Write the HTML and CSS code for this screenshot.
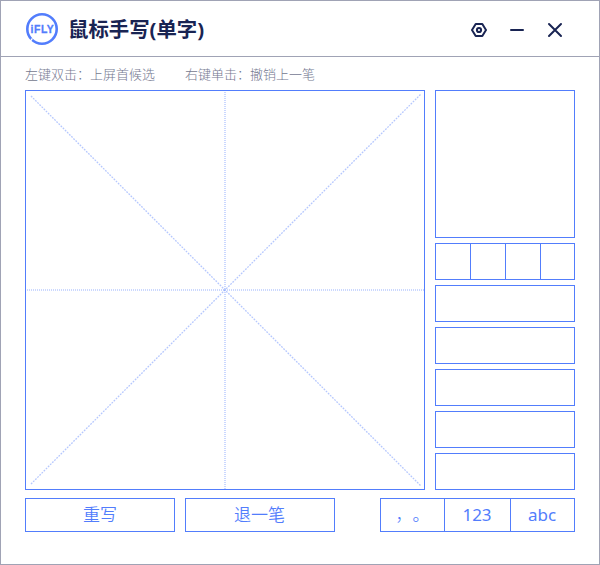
FILE: index.html
```html
<!DOCTYPE html>
<html lang="zh-CN">
<head>
<meta charset="utf-8">
<title>鼠标手写(单字)</title>
<link rel="stylesheet" href="styles.css">
</head>
<body>
<div class="window">
  <header class="titlebar">
    <svg class="logo" width="32" height="32" viewBox="0 0 32 32">
      <circle cx="16" cy="16" r="14.7" fill="none" stroke="#527dfc" stroke-width="2.6"/>
      <path d="M4.4 28.2L6.4 25.4" stroke="#fff" stroke-width="1.4"/>
      <text class="logo-text" x="4.6" y="19.6" textLength="23.2" lengthAdjust="spacing">iFLY</text>
    </svg>
    <h1 class="title">鼠标手写(单字)</h1>
    <div class="controls">
      <svg width="16" height="16" viewBox="0 0 16 16" fill="none" stroke="#192453" stroke-width="2" stroke-linejoin="round">
        <path d="M4.7 2H11.3L15 8L11.3 14H4.7L1 8Z"/><circle cx="8" cy="8" r="2.1"/>
      </svg>
      <svg width="16" height="16" viewBox="0 0 16 16" stroke="#192453" stroke-width="2" stroke-linecap="round"><path d="M2 8H14"/></svg>
      <svg width="16" height="16" viewBox="0 0 16 16" stroke="#192453" stroke-width="2" stroke-linecap="round"><path d="M2 2L14 14M14 2L2 14"/></svg>
    </div>
  </header>
  <div class="hints"><span>左键双击：上屏首候选</span><span>右键单击：撤销上一笔</span></div>
  <main class="board">
    <div class="pad">
      <svg width="398" height="398" viewBox="0 0 398 398" fill="none" stroke="#527dfc">
        <path d="M199 1V398M1 199H398" stroke-width="2" stroke-dasharray="1 1" stroke-opacity=".3"/>
        <path d="M5 5L395 395M5 393L395 3" stroke-width="1.3" stroke-dasharray="1.8 1.2" stroke-opacity=".42"/>
      </svg>
    </div>
    <div class="candidates">
      <div class="box main-candidate"></div>
      <div class="box split"><i></i><i></i><i></i><i></i></div>
      <div class="box"></div>
      <div class="box"></div>
      <div class="box"></div>
      <div class="box"></div>
      <div class="box"></div>
    </div>
  </main>
  <footer class="actions">
    <button class="btn">重写</button>
    <button class="btn undo">退一笔</button>
    <div class="modes">
      <button class="mode punct"><span>，</span><span>。</span></button>
      <button class="mode latin">123</button>
      <button class="mode latin">abc</button>
    </div>
  </footer>
</div>
</body>
</html>
```

FILE: styles.css
```css
* { box-sizing: border-box; }
body { margin: 0; background: #fff; font-family: "Noto Sans", "Noto Sans CJK SC", sans-serif; }
svg { display: block; }
.window { width: 600px; height: 565px; border: 1px solid #a0a3b5; }
.titlebar { height: 56px; display: flex; align-items: center; padding: 0 36px 0 25px; border-bottom: 1px solid #a0a3b5; }
.logo { margin-right: 10px; margin-top: 1px; }
.logo-text { font: bold 10.4px "Liberation Sans", sans-serif; fill: #527dfc; stroke: #527dfc; stroke-width: .3; }
.title { margin: 1px 0 0; font: bold 20.4px/30px "Noto Sans", "Noto Sans CJK SC", sans-serif; color: #192453; white-space: nowrap; }
.controls { margin-left: auto; margin-top: 3px; display: flex; gap: 22px; }
.hints { height: 33px; padding: 7px 24px 0; display: flex; gap: 30px; font-size: 13px; line-height: 20px; font-weight: 300; color: #74788f; font-family: "Noto Sans CJK SC", sans-serif; }
.board { display: flex; gap: 10px; padding: 0 24px; height: 400px; }
.pad { width: 400px; border: 1px solid #527dfc; }
.candidates { width: 140px; display: flex; flex-direction: column; justify-content: space-between; }
.box { height: 37px; border: 1px solid #527dfc; }
.main-candidate { height: 148px; }
.split { display: grid; grid-template-columns: 34px 35px 35px 34px; }
.split i + i { border-left: 1px solid #527dfc; }
.actions { display: flex; gap: 10px; padding: 8px 24px 0; }
button { margin: 0; padding: 0; background: #fff; color: #527dfc; font: 350 17px/32px "Noto Sans", "Noto Sans CJK SC", sans-serif; }
.btn { width: 150px; height: 34px; border: 1px solid #527dfc; }
.undo { padding-right: 1px; }
.modes { width: 195px; height: 34px; margin-left: auto; border: 1px solid #527dfc; display: grid; grid-template-columns: 63px 66px 64px; }
.mode { border: 0; }
.mode + .mode { border-left: 1px solid #527dfc; }
.latin { font-weight: 400; padding-right: 1px; }
.punct { display: flex; justify-content: center; }
.punct span:first-child { font-weight: 300; }
```
